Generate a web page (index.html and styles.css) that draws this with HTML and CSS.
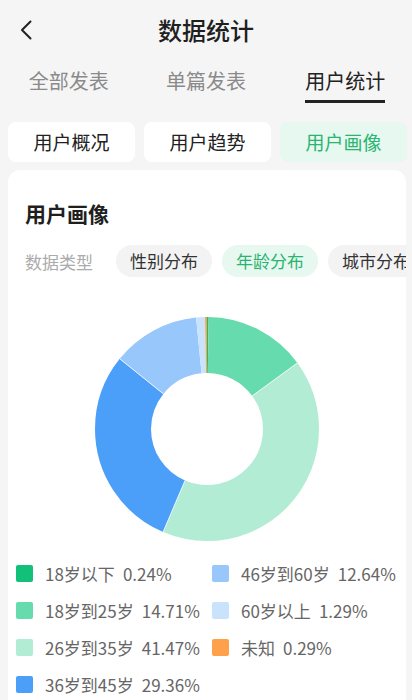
FILE: index.html
```html
<!DOCTYPE html>
<html lang="zh-CN">
<head>
  <meta charset="UTF-8">
  <meta name="viewport" content="width=device-width, initial-scale=1.0">
  <title>数据统计</title>
  <link rel="stylesheet" href="styles.css">
</head>
<body>
  <header class="nav">
    <button class="back" aria-label="返回">
      <svg viewBox="0 0 12 20" fill="none" stroke="currentColor" stroke-width="2" stroke-linecap="round" stroke-linejoin="round">
        <path d="M10.5 1.5L2 10l8.5 8.5" />
      </svg>
    </button>
    <h1 class="nav-title">数据统计</h1>
    <span></span>
  </header>

  <nav class="tabs">
    <div class="tab"><span>全部发表</span></div>
    <div class="tab"><span>单篇发表</span></div>
    <div class="tab active"><span>用户统计</span></div>
  </nav>

  <div class="subtabs">
    <div class="subtab">用户概况</div>
    <div class="subtab">用户趋势</div>
    <div class="subtab active">用户画像</div>
  </div>

  <section class="card">
    <h2 class="card-title">用户画像</h2>
    <div class="type-row">
      <span class="type-label">数据类型</span>
      <span class="pill">性别分布</span>
      <span class="pill active">年龄分布</span>
      <span class="pill">城市分布</span>
    </div>

    <svg class="donut" viewBox="0 0 224 224">
      <g transform="rotate(-90 112 112)" fill="none" stroke-width="56">
        <circle cx="112" cy="112" r="84" pathLength="100" stroke="#12c07a" stroke-dasharray="0.24 100" stroke-dashoffset="0" />
        <circle cx="112" cy="112" r="84" pathLength="100" stroke="#66dbad" stroke-dasharray="14.71 100" stroke-dashoffset="-0.24" />
        <circle cx="112" cy="112" r="84" pathLength="100" stroke="#b2ecd5" stroke-dasharray="41.47 100" stroke-dashoffset="-14.95" />
        <circle cx="112" cy="112" r="84" pathLength="100" stroke="#4c9ff8" stroke-dasharray="29.36 100" stroke-dashoffset="-56.42" />
        <circle cx="112" cy="112" r="84" pathLength="100" stroke="#97c7fb" stroke-dasharray="12.64 100" stroke-dashoffset="-85.78" />
        <circle cx="112" cy="112" r="84" pathLength="100" stroke="#cae3fd" stroke-dasharray="1.29 100" stroke-dashoffset="-98.42" />
        <circle cx="112" cy="112" r="84" pathLength="100" stroke="#ffa14a" stroke-dasharray="0.29 100" stroke-dashoffset="-99.71" />
      </g>
      <g stroke="#fff" stroke-width="1" opacity="0.8">
        <line x1="157.2" y1="78.9" x2="202.4" y2="45.9" />
        <line x1="90.0" y1="163.5" x2="68.1" y2="215.0" />
        <line x1="68.4" y1="76.9" x2="24.7" y2="41.8" />
      </g>
    </svg>

    <ul class="legend">
      <li><i style="background:#12c07a"></i>18岁以下<span>0.24%</span></li>
      <li><i style="background:#66dbad"></i>18岁到25岁<span>14.71%</span></li>
      <li><i style="background:#b2ecd5"></i>26岁到35岁<span>41.47%</span></li>
      <li><i style="background:#4c9ff8"></i>36岁到45岁<span>29.36%</span></li>
      <li><i style="background:#97c7fb"></i>46岁到60岁<span>12.64%</span></li>
      <li><i style="background:#cae3fd"></i>60岁以上<span>1.29%</span></li>
      <li><i style="background:#ffa14a"></i>未知<span>0.29%</span></li>
    </ul>
  </section>
</body>
</html>
```

FILE: styles.css
```css
:root {
	--page-bg: #f5f5f5;
	--green: #2ab472;
	--green-bg: #e6f8ef;
	--text: #1f1f1f;
}

* {
	box-sizing: border-box;
}

body {
	margin: 0;
	width: 412px;
	height: 700px;
	overflow: hidden;
	background: var(--page-bg);
	font-family: "Noto Sans CJK SC", "Noto Sans", sans-serif;
	color: var(--text);
}

/* top bar */
.nav {
	height: 60px;
	display: grid;
	grid-template-columns: 56px 1fr 56px;
	align-items: center;
}

.back {
	border: none;
	background: none;
	padding: 0 0 0 20px;
	height: 60px;
	display: flex;
	align-items: center;
	color: #222;
}

.back svg {
	width: 12px;
	height: 20px;
}

.nav-title {
	margin: 0;
	text-align: center;
	font-size: 24px;
	font-weight: 500;
	line-height: 60px;
}

/* main tabs */
.tabs {
	display: grid;
	grid-template-columns: repeat(3, 1fr);
	padding-top: 7px;
	margin-bottom: 19px;
}

.tab {
	display: flex;
	justify-content: center;
}

.tab span {
	font-size: 20px;
	line-height: 28px;
	color: #8a8a8a;
	padding-bottom: 5px;
	border-bottom: 3px solid transparent;
}

.tab.active span {
	color: #222;
	border-bottom-color: #222;
}

.tab.active {
	padding-left: 4px;
}

/* sub tabs */
.subtabs {
	display: flex;
	gap: 9px;
	padding-left: 8px;
}

.subtab {
	width: 127px;
	height: 40px;
	flex-shrink: 0;
	border-radius: 8px;
	background: #fff;
	font-size: 19px;
	line-height: 40px;
	text-align: center;
	color: #222;
}

.subtab.active {
	background: var(--green-bg);
	color: var(--green);
}

/* card */
.card {
	margin: 8px 6px 0 8px;
	background: #fff;
	border-radius: 12px 12px 0 0;
	overflow: hidden;
	padding-top: 28px;
	height: 530px;
}

.card-title {
	margin: 0;
	padding-left: 17px;
	font-size: 21px;
	font-weight: 700;
	line-height: 30px;
}

.type-row {
	display: flex;
	align-items: center;
	gap: 10px;
	margin-top: 17px;
	padding-left: 17px;
	white-space: nowrap;
}

.type-label {
	font-size: 17px;
	color: #ababab;
	margin-right: 13px;
}

.pill {
	flex-shrink: 0;
	height: 32px;
	line-height: 32px;
	padding: 0 14px;
	border-radius: 16px;
	background: #f3f3f3;
	font-size: 17px;
	color: #333;
}

.pill.active {
	background: var(--green-bg);
	color: var(--green);
}

.donut {
	display: block;
	width: 224px;
	height: 224px;
	margin: 40px auto 0;
}

.legend {
	list-style: none;
	margin: 14px 0 0;
	padding: 0 0 0 8px;
	display: grid;
	grid-template-columns: 196px 1fr;
	grid-template-rows: repeat(4, 37px);
	grid-auto-flow: column;
}

.legend li {
	display: flex;
	align-items: center;
	font-size: 17px;
	color: #666;
	white-space: nowrap;
}

.legend i {
	width: 17px;
	height: 17px;
	border-radius: 2px;
	margin-right: 12px;
	flex-shrink: 0;
}

.legend span {
	margin-left: 8px;
}
```
